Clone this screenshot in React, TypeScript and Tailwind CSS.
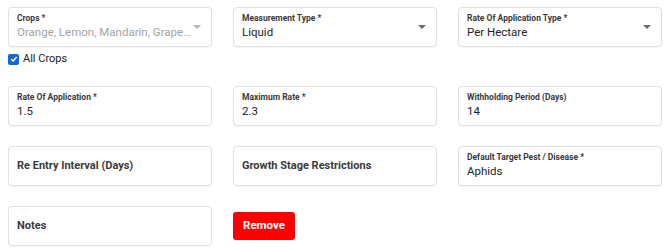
import React from "react";

const font = { fontFamily: "Roboto, 'Liberation Sans', sans-serif" };

function Arrow({ light }: { light?: boolean }) {
  return (
    <svg width="8" height="4" viewBox="0 0 8 4" className="absolute right-[10px] top-[17px]">
      <path d="M0 0 L8 0 L4 4 Z" fill={light ? "#b5b5b5" : "#6b6b6b"} />
    </svg>
  );
}

function Field({
  label,
  value,
  select,
  muted,
}: {
  label: string;
  value: string;
  select?: boolean;
  muted?: boolean;
}) {
  return (
    <div className="relative h-[40px] rounded-[4px] border border-[#e0e0e0] bg-white px-[8px] pt-[5px] shadow-[0_1px_1px_rgba(0,0,0,0.04)]">
      <div className="text-[8.5px] leading-[10px] font-bold text-[#3a3a3a]">{label}</div>
      <div
        className={`text-[11.5px] leading-[19px] truncate pr-[12px] ${
          muted ? "text-[#a3a3a3]" : "text-[#222]"
        }`}
      >
        {value}
      </div>
      {select && <Arrow light={muted} />}
    </div>
  );
}

function EmptyField({ label }: { label: string }) {
  return (
    <div className="flex h-[40px] items-center rounded-[4px] border border-[#e0e0e0] bg-white px-[8px] shadow-[0_1px_1px_rgba(0,0,0,0.04)]">
      <span className="text-[11px] font-bold text-[#3a3a3a]">{label}</span>
    </div>
  );
}

export default function App() {
  return (
    <div className="min-h-[249px] w-[670px] bg-white px-[8px] pt-[7px]" style={font}>
      <div className="grid grid-cols-3 items-start gap-x-[21px] gap-y-[20px]">
        {/* Row 1 */}
        <div>
          <Field label="Crops *" value="Orange, Lemon, Mandarin, Grapefruit" select muted />
          <label className="mt-[5px] flex h-[14px] items-center gap-[4px] text-[11px] leading-[14px] text-[#222]">
            <span className="flex h-[11px] w-[11px] items-center justify-center rounded-[2px] bg-[#1565d8]">
              <svg width="8" height="8" viewBox="0 0 8 8">
                <path d="M1.3 4.2 L3.2 6 L6.7 2" stroke="white" strokeWidth="1.5" fill="none" />
              </svg>
            </span>
            All Crops
          </label>
        </div>
        <Field label="Measurement Type *" value="Liquid" select />
        <Field label="Rate Of Application Type *" value="Per Hectare" select />

        {/* Row 2 */}
        <Field label="Rate Of Application *" value="1.5" />
        <Field label="Maximum Rate *" value="2.3" />
        <Field label="Withholding Period (Days)" value="14" />

        {/* Row 3 */}
        <EmptyField label="Re Entry Interval (Days)" />
        <EmptyField label="Growth Stage Restrictions" />
        <Field label="Default Target Pest / Disease *" value="Aphids" />

        {/* Row 4 */}
        <EmptyField label="Notes" />
        <div className="pt-[6px]">
          <button className="h-[28px] w-[62px] rounded-[3px] bg-[#ff0000] text-[11.5px] font-bold text-white">
            Remove
          </button>
        </div>
      </div>
    </div>
  );
}
